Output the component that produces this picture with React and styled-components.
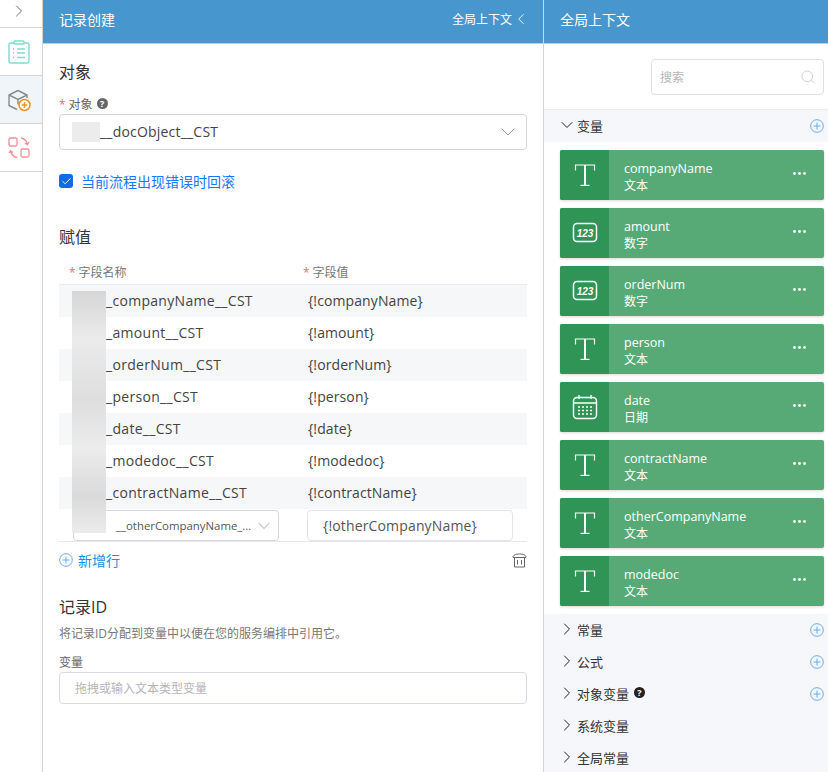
import styled, { createGlobalStyle } from "styled-components";
import { ChevronDown, ChevronLeft, ChevronRight, Search, Check } from "lucide-react";

const GlobalStyle = createGlobalStyle`
  html, body {
    margin: 0;
    padding: 0;
    height: 100%;
    background: #fff;
  }
  body {
    font-family: "Open Sans", "Noto Sans CJK SC", sans-serif;
    font-size: 14px;
    color: #333;
    overflow: hidden;
  }
  * { box-sizing: border-box; }
`;

const assignRows = [
  ["_companyName__CST", "{!companyName}"],
  ["_amount__CST", "{!amount}"],
  ["_orderNum__CST", "{!orderNum}"],
  ["_person__CST", "{!person}"],
  ["_date__CST", "{!date}"],
  ["_modedoc__CST", "{!modedoc}"],
  ["_contractName__CST", "{!contractName}"],
];

const variables = [
  { name: "companyName", type: "文本", icon: "text" },
  { name: "amount", type: "数字", icon: "number" },
  { name: "orderNum", type: "数字", icon: "number" },
  { name: "person", type: "文本", icon: "text" },
  { name: "date", type: "日期", icon: "date" },
  { name: "contractName", type: "文本", icon: "text" },
  { name: "otherCompanyName", type: "文本", icon: "text" },
  { name: "modedoc", type: "文本", icon: "text" },
];

const collapsed = [
  { label: "常量", add: true },
  { label: "公式", add: true },
  { label: "对象变量", add: true, help: true },
  { label: "系统变量" },
  { label: "全局常量" },
];

const ListIcon = () => (
  <svg width="24" height="24" viewBox="0 0 24 24" fill="none" stroke="#7fdcd2" strokeWidth="1.4">
    <rect x="2" y="3" width="20" height="20" rx="2" />
    <rect x="7" y="1" width="10" height="3" rx="1" fill="#fff" />
    <path d="M6 9h1M6 13h1M6 17.500h1" stroke="#8fc7a8" />
    <path d="M10 9h8M10 13h8M10 17.500h8" />
  </svg>
);

const BoxAddIcon = () => (
  <svg width="24" height="24" viewBox="0 0 24 24" fill="none">
    <path d="M11 2.500 20 7v3M11 2.500 2 7v10.500l8 4M2 7l9 4.500 9-4.500M11 11.500v5" stroke="#8a8a8a" strokeWidth="1.4" />
    <circle cx="17.500" cy="17" r="5.500" fill="#fff" stroke="#e8932c" strokeWidth="1.5" />
    <path d="M14.800 17h5.400M17.500 14.300v5.400" stroke="#e8932c" strokeWidth="1.4" />
  </svg>
);

const ConvertIcon = () => (
  <svg width="22" height="22" viewBox="0 0 22 22" fill="none" stroke="#f58e97" strokeWidth="1.3">
    <rect x="1" y="1" width="8" height="8" rx="1.500" />
    <rect x="13" y="12" width="8" height="8" rx="1.500" />
    <path d="M13 1c3 .3 5.500 2.500 6.500 6.500M17 6l2.500 1.800L21 5" />
    <path d="M9 20.500C6 20 3.500 18 2.500 14M5 15.500l-2.500-1.800L1 16" />
  </svg>
);

const PlusCircle = ({ size = 14 }) => (
  <svg width={size} height={size} viewBox="0 0 14 14" fill="none" stroke="#6aa9ea" strokeWidth="1">
    <circle cx="7" cy="7" r="6.300" />
    <path d="M7 3.500v7M3.500 7h7" />
  </svg>
);

const TrashIcon = () => (
  <svg width="15" height="15" viewBox="0 0 15 15" fill="none" stroke="#666" strokeWidth="1">
    <path d="M1 4.500c0-2.500 2.500-3.500 6.500-3.500S14 2 14 4.500zM2.500 4.500v9.500h10V4.500M5.500 7v4.500M9.500 7v4.500" />
  </svg>
);

const TextTypeIcon = () => (
  <svg width="24" height="24" viewBox="0 0 24 24" fill="none" stroke="#fff">
    <path d="M2.500 7.500V2h19v5.500" strokeWidth="1.200" />
    <path d="M12 2v20" strokeWidth="2" />
    <path d="M7.500 22.400h9" strokeWidth="1.200" />
  </svg>
);

const NumberTypeIcon = () => (
  <svg width="26" height="22" viewBox="0 0 26 22">
    <rect x="1.500" y="1.500" width="23" height="18" rx="3.500" fill="none" stroke="#fff" strokeWidth="1.500" />
    <text x="13" y="14.700" textAnchor="middle" fill="#fff" fontSize="10" fontWeight="700" fontStyle="italic" fontFamily="Liberation Sans, sans-serif">123</text>
  </svg>
);

const DateTypeIcon = () => (
  <svg width="26" height="26" viewBox="0 0 26 26" fill="none" stroke="#fff">
    <rect x="1.500" y="3.500" width="23" height="21" rx="3.500" strokeWidth="1.400" />
    <path d="M1.500 9h23M7 1v4M19 1v4" strokeWidth="1.400" />
    <path
      d="M6 13h2M10 13h2M14 13h2M18 13h2M6 16.500h2M10 16.500h2M14 16.500h2M18 16.500h2M6 20h2M10 20h2M14 20h2M18 20h2"
      strokeWidth="1.500"
    />
  </svg>
);

const MoreIcon = () => (
  <svg width="13" height="3" viewBox="0 0 13 3" fill="#fff">
    <circle cx="1.500" cy="1.500" r="1.400" />
    <circle cx="6.500" cy="1.500" r="1.400" />
    <circle cx="11.500" cy="1.500" r="1.400" />
  </svg>
);

const typeIcons = {
  text: <TextTypeIcon />,
  number: <NumberTypeIcon />,
  date: <DateTypeIcon />,
};

const App = () => {
  return (
    <>
      <GlobalStyle />
      <Page>
        <SideBar>
          <ToggleCell>
            <ChevronRight size={20} strokeWidth={1} color="#555" />
          </ToggleCell>
          <SideCell>
            <ListIcon />
          </SideCell>
          <SideCell $active>
            <BoxAddIcon />
          </SideCell>
          <SideCell>
            <ConvertIcon />
          </SideCell>
        </SideBar>

        <MainPanel>
          <Header>
            <span>记录创建</span>
            <HeaderLink>
              全局上下文
              <ChevronLeft size={18} strokeWidth={1.2} />
            </HeaderLink>
          </Header>
          <MainBody>
            <SectionTitle>对象</SectionTitle>
            <FieldLabel>
              <Required>*</Required>
              对象
              <HelpDot>?</HelpDot>
            </FieldLabel>
            <ObjectSelect>
              <ObjectName>
                <ObjectRedact />
                <ObjectText>__docObject__CST</ObjectText>
              </ObjectName>
              <ChevronDown size={24} strokeWidth={0.8} color="#888" />
            </ObjectSelect>

            <RollbackRow>
              <CheckBox>
                <Check size={11} strokeWidth={2} color="#fff" />
              </CheckBox>
              当前流程出现错误时回滚
            </RollbackRow>

            <AssignTitle>赋值</AssignTitle>
            <AssignTable>
              <TableHead>
                <HeadCell>
                  <Required>*</Required>
                  字段名称
                </HeadCell>
                <HeadCell $value>
                  <Required>*</Required>
                  字段值
                </HeadCell>
              </TableHead>
              {assignRows.map(([field, value], index) => (
                <TableRow key={field} $striped={index % 2 === 0}>
                  <FieldCell>{field}</FieldCell>
                  <ValueCell>{value}</ValueCell>
                </TableRow>
              ))}
              <EditRow>
                <EditSelect>
                  <span>__otherCompanyName_...</span>
                  <ChevronDown size={20} strokeWidth={0.9} color="#888" />
                </EditSelect>
                <EditValue>{"{!otherCompanyName}"}</EditValue>
              </EditRow>
              <TableRedact />
            </AssignTable>

            <ActionRow>
              <AddLink>
                <PlusCircle />
                新增行
              </AddLink>
              <TrashIcon />
            </ActionRow>

            <RecordTitle>记录ID</RecordTitle>
            <Description>将记录ID分配到变量中以便在您的服务编排中引用它。</Description>
            <VariableLabel>变量</VariableLabel>
            <VariableInput>拖拽或输入文本类型变量</VariableInput>
          </MainBody>
        </MainPanel>

        <ContextPanel>
          <Header>
            <span>全局上下文</span>
          </Header>
          <SearchArea>
            <SearchBox>
              搜索
              <Search size={16} strokeWidth={1} color="#bbb" />
            </SearchBox>
          </SearchArea>
          <GroupRow $open>
            <GroupName>
              <ChevronDown size={20} strokeWidth={1.2} color="#222" />
              变量
            </GroupName>
            <PlusCircle />
          </GroupRow>
          <CardList>
            {variables.map((item) => (
              <VariableCard key={item.name}>
                <CardIcon>{typeIcons[item.icon]}</CardIcon>
                <CardInfo>
                  <CardName>{item.name}</CardName>
                  <CardType>{item.type}</CardType>
                </CardInfo>
                <CardMore>
                  <MoreIcon />
                </CardMore>
              </VariableCard>
            ))}
          </CardList>
          <GroupList>
            {collapsed.map((group) => (
              <GroupRow key={group.label}>
                <GroupName>
                  <ChevronRight size={20} strokeWidth={1.2} color="#222" />
                  {group.label}
                  {group.help && <HelpDot $dark>?</HelpDot>}
                </GroupName>
                {group.add && <PlusCircle />}
              </GroupRow>
            ))}
          </GroupList>
        </ContextPanel>
      </Page>
    </>
  );
};

const Page = styled.div`
  display: flex;
  width: 828px;
  height: 772px;
  overflow: hidden;
`;

const SideBar = styled.div`
  width: 43px;
  flex-shrink: 0;
  border-right: 1px solid #d4d4d4;
`;

const ToggleCell = styled.div`
  height: 28px;
  display: flex;
  align-items: center;
  justify-content: center;
  padding: 0 5px 6px 0;
  border-bottom: 1px solid #d4d4d4;
`;

const SideCell = styled.div`
  height: 48px;
  display: flex;
  align-items: center;
  justify-content: center;
  padding-right: 5px;
  background: ${(p) => (p.$active ? "#eff5f8" : "#fff")};
  border-bottom: 1px solid #d4d4d4;
`;

const MainPanel = styled.div`
  width: 501px;
  flex-shrink: 0;
  border-right: 1px solid #d4d4d4;
`;

const Header = styled.div`
  height: 44px;
  padding: 0 13px 6px 16px;
  display: flex;
  align-items: center;
  justify-content: space-between;
  background: #4796ce;
  border-bottom: 1px solid #b9d3e6;
  color: #fff;
  font-size: 14px;
`;

const HeaderLink = styled.span`
  display: flex;
  align-items: center;
  font-size: 12px;
`;

const MainBody = styled.div`
  padding: 0 16px;
`;

const SectionTitle = styled.div`
  margin-top: 17px;
  height: 22px;
  line-height: 22px;
  font-size: 16px;
  color: #333;
`;

const FieldLabel = styled.div`
  margin-top: 11px;
  height: 20px;
  display: flex;
  align-items: center;
  font-size: 12px;
  color: #666;
`;

const Required = styled.span`
  margin-right: 3px;
  color: #ea6b73;
`;

const HelpDot = styled.span`
  width: 11px;
  height: 11px;
  margin-left: ${(p) => (p.$dark ? "5px" : "4px")};
  margin-bottom: 2px;
  border-radius: 50%;
  display: inline-flex;
  align-items: center;
  justify-content: center;
  background: ${(p) => (p.$dark ? "#222" : "#666")};
  color: #fff;
  font-size: 9px;
  font-weight: 700;
`;

const ObjectSelect = styled.div`
  height: 36px;
  padding: 0 6px 0 12px;
  display: flex;
  align-items: center;
  justify-content: space-between;
  border: 1px solid #d4d6dc;
  border-radius: 4px;
`;

const ObjectName = styled.div`
  display: flex;
  align-items: center;
  font-size: 14px;
  letter-spacing: 0.2px;
  color: #444;
`;

const ObjectText = styled.span`
  margin-top: -2px;
`;

const ObjectRedact = styled.span`
  width: 28px;
  height: 20px;
  background: #ececec;
`;

const RollbackRow = styled.div`
  margin-top: 22px;
  height: 18px;
  display: flex;
  align-items: center;
  gap: 8px;
  color: #1677ff;
  font-size: 14px;
`;

const CheckBox = styled.span`
  width: 14px;
  height: 14px;
  border-radius: 3px;
  display: flex;
  align-items: center;
  justify-content: center;
  background: #0f6ce6;
`;

const AssignTitle = styled.div`
  margin-top: 36px;
  height: 22px;
  line-height: 22px;
  font-size: 16px;
  color: #333;
`;

const AssignTable = styled.div`
  position: relative;
  margin-top: 13px;
`;

const TableHead = styled.div`
  height: 24px;
  padding-bottom: 2px;
  display: grid;
  grid-template-columns: 244px 1fr;
  align-items: center;
  border-bottom: 1px solid #e9ecef;
`;

const HeadCell = styled.div`
  padding-left: ${(p) => (p.$value ? "0" : "10px")};
  font-size: 12px;
  color: #777;
`;

const TableRow = styled.div`
  height: 32px;
  padding-bottom: 2px;
  display: grid;
  grid-template-columns: 249px 1fr;
  align-items: center;
  background: ${(p) => (p.$striped ? "#f5f7f9" : "#fff")};
  font-size: 14px;
  color: #444;
`;

const FieldCell = styled.span`
  padding-left: 47px;
  letter-spacing: 0.3px;
`;

const ValueCell = styled.span`
  letter-spacing: 0.1px;
`;

const EditRow = styled.div`
  height: 33px;
  padding: 1px 14px 0;
  display: flex;
  gap: 28px;
  border-bottom: 1px solid #e6e8eb;
`;

const EditSelect = styled.div`
  width: 206px;
  height: 31px;
  padding: 0 4px 0 42px;
  display: flex;
  align-items: center;
  justify-content: space-between;
  border: 1px solid #d4d6dc;
  border-radius: 4px;
  font-size: 11.400px;
  color: #555;
  white-space: nowrap;

  svg {
    flex-shrink: 0;
  }
`;

const EditValue = styled.div`
  width: 206px;
  height: 31px;
  padding-left: 15px;
  display: flex;
  align-items: center;
  border: 1px solid #e2e4e9;
  border-radius: 4px;
  font-size: 14px;
  letter-spacing: 0.15px;
  color: #555;
`;

const TableRedact = styled.div`
  position: absolute;
  left: 13px;
  top: 30px;
  width: 34px;
  height: 242px;
  background: linear-gradient(180deg, #d6d6d6 0%, #ebebeb 20%, #dedede 45%, #ececec 65%, #dadada 85%, #ececec 100%);
`;

const ActionRow = styled.div`
  margin-top: 9px;
  height: 18px;
  display: flex;
  align-items: center;
  justify-content: space-between;
`;

const AddLink = styled.span`
  display: flex;
  align-items: center;
  gap: 5px;
  color: #1690e8;
  font-size: 14px;
`;

const RecordTitle = styled.div`
  margin-top: 27px;
  height: 22px;
  line-height: 22px;
  font-size: 16px;
  color: #333;
`;

const Description = styled.div`
  margin-top: 7px;
  font-size: 12px;
  line-height: 18px;
  color: #777;
`;

const VariableLabel = styled.div`
  margin-top: 11px;
  font-size: 12px;
  line-height: 18px;
  color: #666;
`;

const VariableInput = styled.div`
  height: 32px;
  padding-left: 15px;
  display: flex;
  align-items: center;
  border: 1px solid #d9dbe2;
  border-radius: 4px;
  font-size: 12px;
  color: #b5b5b5;
`;

const ContextPanel = styled.div`
  flex: 1;
  min-width: 0;
`;

const SearchArea = styled.div`
  height: 66px;
  padding: 15px 4px 0 0;
  display: flex;
  justify-content: flex-end;
  border-bottom: 1px solid #e9ebf0;
`;

const SearchBox = styled.div`
  width: 173px;
  height: 36px;
  padding: 0 7px 0 8px;
  display: flex;
  align-items: center;
  justify-content: space-between;
  border: 1px solid #dfe0e6;
  border-radius: 4px;
  font-size: 12px;
  color: #b5b5b5;
`;

const GroupRow = styled.div`
  height: 32px;
  padding: 0 4px 0 13px;
  display: flex;
  align-items: center;
  justify-content: space-between;
  background: #f6f7fa;
`;

const GroupName = styled.span`
  display: flex;
  align-items: center;
  padding-bottom: 2px;
  font-size: 13px;
  color: #333;
`;

const CardList = styled.div`
  padding: 8px 4px 8px 16px;
  display: flex;
  flex-direction: column;
  gap: 8px;
`;

const VariableCard = styled.div`
  height: 50px;
  display: flex;
  align-items: center;
  background: #57aa76;
  border-radius: 2px;
  box-shadow: 0 1px 3px rgba(0, 0, 0, 0.15);
  color: #fff;
`;

const CardIcon = styled.div`
  width: 49px;
  height: 100%;
  flex-shrink: 0;
  display: flex;
  align-items: center;
  justify-content: center;
  background: #2f9456;
  border-radius: 2px 0 0 2px;
`;

const CardInfo = styled.div`
  flex: 1;
  min-width: 0;
  padding: 4px 0 0 15px;
`;

const CardName = styled.div`
  font-size: 12.500px;
  line-height: 17px;
`;

const CardType = styled.div`
  font-size: 12px;
  line-height: 17px;
`;

const CardMore = styled.span`
  display: flex;
  padding: 0 18px 3px 0;
`;

const GroupList = styled.div`
  background: #f6f7fa;
`;

export default App;
